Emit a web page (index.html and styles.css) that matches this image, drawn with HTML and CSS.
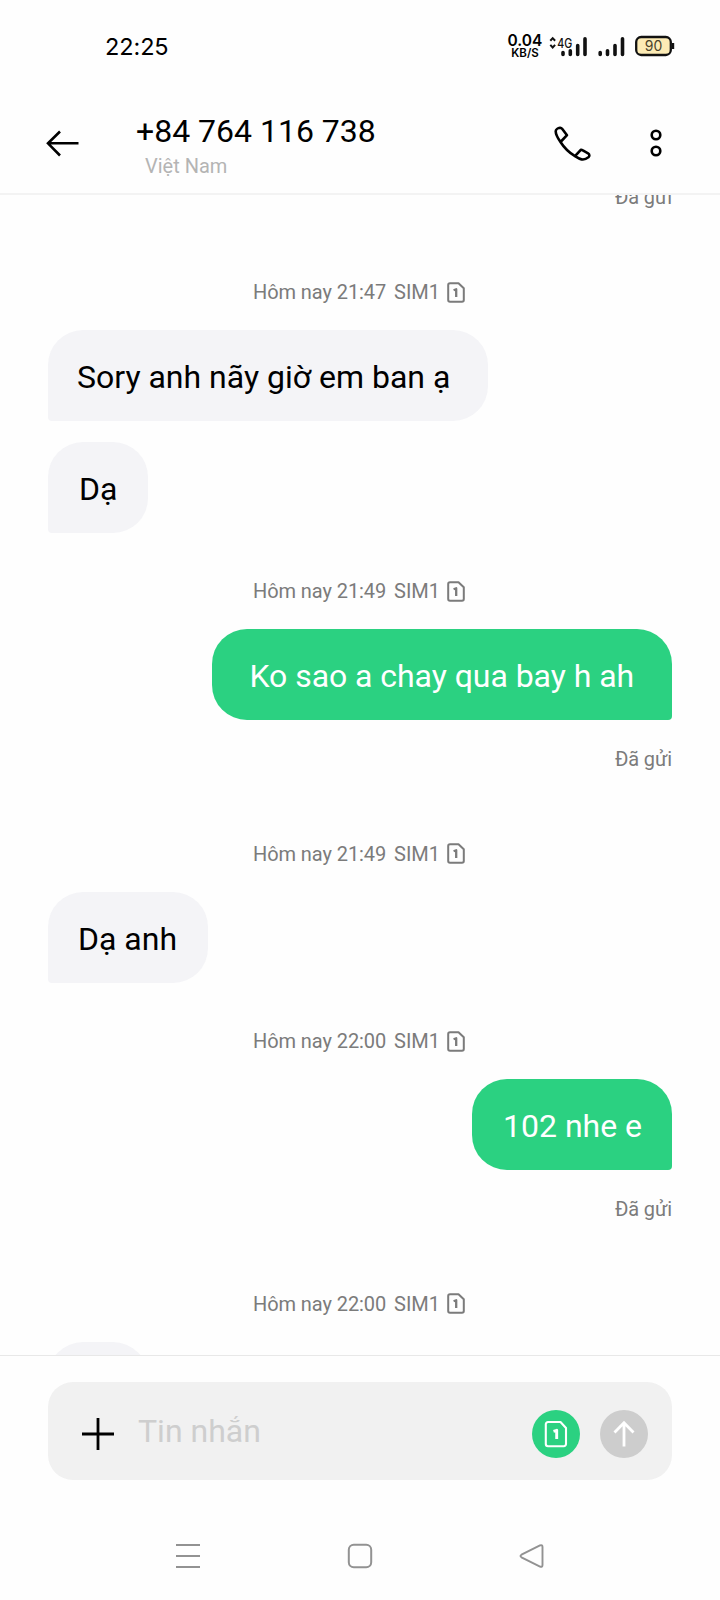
FILE: index.html
```html
<!DOCTYPE html>
<html lang="vi">
<head>
<meta charset="utf-8">
<title>+84 764 116 738</title>
<link rel="stylesheet" href="styles.css">
</head>
<body>
<svg class="defs" width="0" height="0" aria-hidden="true">
  <symbol id="sim" viewBox="0 0 18 21">
    <path d="M3 1.2h8.5L16.8 6.2V18a1.8 1.8 0 0 1-1.8 1.8H3A1.8 1.8 0 0 1 1.2 18V3A1.8 1.8 0 0 1 3 1.2Z" fill="none" stroke="currentColor" stroke-width="2" stroke-linejoin="round"/>
    <path d="M6.600 8.200 9.200 7.200V15" fill="none" stroke="currentColor" stroke-width="2.300" stroke-linejoin="round"/>
  </symbol>
  <symbol id="sim-light" viewBox="0 0 24 28">
    <path d="M4 2h12.500L22 8V24a2.200 2.200 0 0 1-2.200 2.200H4A2.200 2.200 0 0 1 1.800 24V4.200A2.200 2.200 0 0 1 4 2Z" fill="none" stroke="currentColor" stroke-width="2.100" stroke-linejoin="round"/>
    <path d="M9.500 11.300 12.700 10.300V19" fill="none" stroke="currentColor" stroke-width="2.900" stroke-linejoin="round"/>
  </symbol>
</svg>
<div class="phone">
  <div class="statusbar">
    <span class="clock">22:25</span>
    <div class="indicators">
      <div class="speed"><span class="rate">0.04</span><span class="unit">KB/S</span></div>
      <svg class="signals" width="78" height="24" viewBox="0 0 78 24">
        <path d="M1.300 7.200 3.700 4.600 6.100 7.200M1.300 11.400 3.700 14 6.100 11.400" transform="translate(0 -.5)" fill="none" stroke="#111" stroke-width="2"/>
        <text class="net" x="8.200" y="13.500" textLength="15" lengthAdjust="spacingAndGlyphs">4G</text>
        <path d="M14 18.500v2M21.300 16.800v3.700M28.700 11.500v9M36 4.800v15.700M51.200 18.500v2M58.500 16.800v3.700M66 11.500v9M73.500 4.800v15.700" stroke="#111" stroke-width="3.600" stroke-linecap="round"/>
      </svg>
      <svg class="battery" width="40" height="22" viewBox="0 0 40 22">
        <rect x="1.200" y="2" width="34.600" height="18" rx="5" fill="#fcebb5" stroke="#111" stroke-width="2.300"/>
        <path d="M38 8v6" stroke="#111" stroke-width="2.400"/>
        <text class="charge" x="18.500" y="16" text-anchor="middle">90</text>
      </svg>
    </div>
  </div>

  <header class="header">
    <svg class="back" width="34" height="28" viewBox="0 0 34 28">
      <path d="M32.500 14.300H2M14 2.500 2 14.300 14 26.500" fill="none" stroke="#000" stroke-width="2.600"/>
    </svg>
    <div class="contact">
      <div class="number">+84 764 116 738</div>
      <div class="region">Việt Nam</div>
    </div>
    <svg class="call" width="38" height="36" viewBox="0 0 38 36">
      <path d="M6.500 16C3 11 1.700 7.500 1.700 5.200 1.700 3.500 4 2 6 1.700 7 1.600 7.700 2.200 8.300 3L13 9.200 6.500 16C10 21.500 15 26.500 21 30.200M21 30.200 27 23.700C28 23.900 31.500 25.800 34 27.300 35.700 28.500 35.800 30 34.400 31.300 29.500 35.300 25.500 33.200 21 30.200" fill="none" stroke="#000" stroke-width="2.600" stroke-linejoin="round"/>
    </svg>
    <svg class="more" width="12" height="28" viewBox="0 0 12 28">
      <circle cx="6" cy="6" r="4.300" fill="none" stroke="#000" stroke-width="2.600"/>
      <circle cx="6" cy="22" r="4.300" fill="none" stroke="#000" stroke-width="2.600"/>
    </svg>
  </header>

  <main class="chat">
    <div class="thread">
      <section class="group">
        <div class="sent">Đã gửi</div>
      </section>
      <section class="group">
        <div class="time"><span class="when">Hôm nay 21:47</span><span class="slot">SIM1</span><svg class="sim"><use href="#sim"/></svg></div>
        <div class="bubble in wide">Sory anh nãy giờ em ban ạ</div>
      </section>
      <section class="group">
        <div class="bubble in short">Dạ</div>
      </section>
      <section class="group">
        <div class="time"><span class="when">Hôm nay 21:49</span><span class="slot">SIM1</span><svg class="sim"><use href="#sim"/></svg></div>
        <div class="bubble out long">Ko sao a chay qua bay h ah</div>
        <div class="sent">Đã gửi</div>
      </section>
      <section class="group">
        <div class="time"><span class="when">Hôm nay 21:49</span><span class="slot">SIM1</span><svg class="sim"><use href="#sim"/></svg></div>
        <div class="bubble in medium">Dạ anh</div>
      </section>
      <section class="group">
        <div class="time"><span class="when">Hôm nay 22:00</span><span class="slot">SIM1</span><svg class="sim"><use href="#sim"/></svg></div>
        <div class="bubble out room">102 nhe e</div>
        <div class="sent">Đã gửi</div>
      </section>
      <section class="group">
        <div class="time"><span class="when">Hôm nay 22:00</span><span class="slot">SIM1</span><svg class="sim"><use href="#sim"/></svg></div>
        <div class="bubble in short"></div>
      </section>
    </div>
  </main>

  <footer class="composer">
    <div class="field">
      <svg class="plus" width="32" height="32" viewBox="0 0 32 32"><path d="M16 0v32M0 16h32" stroke="#000" stroke-width="2.800"/></svg>
      <span class="placeholder">Tin nhắn</span>
      <div class="button simpick"><svg width="24" height="28"><use href="#sim-light"/></svg></div>
      <div class="button send">
        <svg width="24" height="28" viewBox="0 0 24 28"><path d="M12 26.500V2.500M2.500 12.500 12 2.800 21.500 12.500" fill="none" stroke="#fff" stroke-width="2.800"/></svg>
      </div>
    </div>
  </footer>

  <nav class="navbar">
    <svg width="26" height="26" viewBox="0 0 26 26"><path d="M1 2h24M1 13h24M1 24h24" stroke="#929292" stroke-width="2"/></svg>
    <svg width="26" height="26" viewBox="0 0 26 26"><rect x="1.800" y="1.800" width="22.400" height="22.400" rx="5" fill="none" stroke="#929292" stroke-width="2"/></svg>
    <svg width="26" height="26" viewBox="0 0 26 26"><path d="M21 2.400 2.500 11.700Q.5 13 2.500 14.300L21 23.600Q23.500 24.400 23.500 22V4Q23.500 1.600 21 2.400Z" fill="none" stroke="#929292" stroke-width="1.900"/></svg>
  </nav>
</div>
</body>
</html>
```
FILE: styles.css
```css
* { box-sizing: border-box; }
body {
  margin: 0;
  background: #fefefe;
  color: #000;
  font-family: Roboto, "Noto Sans", sans-serif;
}
svg { display: block; flex: none; }
.defs { position: absolute; }
.phone {
  width: 720px;
  height: 1600px;
  display: flex;
  flex-direction: column;
  overflow: hidden;
}

/* Status bar */
.statusbar {
  flex: none;
  height: 92px;
  padding: 0 45px 0 105px;
  display: flex;
  align-items: center;
  justify-content: space-between;
}
.clock {
  font-family: Inter, sans-serif;
  font-size: 23.5px;
  line-height: 30px;
  letter-spacing: -0.1px;
  padding-top: 1px;
}
.indicators { display: flex; align-items: center; }
.speed {
  width: 36px;
  display: flex;
  flex-direction: column;
  align-items: center;
  font-family: Inter, sans-serif;
  font-weight: 600;
  margin-right: 6px;
}
.rate { font-size: 15.5px; line-height: 14px; }
.unit { font-size: 11.5px; line-height: 11px; font-weight: 600; }
.net { font: 500 13px Inter, sans-serif; fill: #111; }
.signals { margin-right: 8px; }
.charge { font: 14px Inter, sans-serif; fill: #4b432b; }

/* Header */
.header {
  flex: none;
  height: 103px;
  padding: 0 58px 0 46px;
  border-bottom: 2px solid #f3f3f3;
  display: flex;
  align-items: flex-start;
}
.back { margin-top: 37px; }
.contact { margin: 20px 0 0 56px; flex: 1; }
.number { font-size: 32px; line-height: 38px; }
.region {
  margin: 3px 0 0 9px;
  font-size: 20px;
  line-height: 26px;
  color: #b4b4b4;
}
.call { margin: 34px 58px 0 0; }
.more { margin-top: 37px; }

/* Messages */
.chat {
  flex: none;
  height: 1161px;
  overflow: hidden;
  border-bottom: 1px solid #e8e8e8;
}
.thread {
  margin-top: -36.5px;
  padding: 0 48px;
  display: flex;
  flex-direction: column;
  gap: 20.5px;
}
.group { display: flex; flex-direction: column; }
.time, .sent {
  display: flex;
  align-items: center;
  font-size: 20px;
  line-height: 24px;
  color: #7b7b7b;
}
.time { height: 76px; padding-left: 205px; }
.when { width: 133px; margin-right: 8px; white-space: nowrap; letter-spacing: -0.08px; }
.slot { width: 45px; margin-right: 8px; }
.sim { width: 18px; height: 21px; }
.sent { height: 75px; padding-top: 2px; justify-content: flex-end; letter-spacing: -0.1px; }
.bubble {
  height: 91px;
  border-radius: 35px;
  font-size: 32px;
  line-height: 94px;
  white-space: nowrap;
}
.in {
  align-self: flex-start;
  background: #f4f4f7;
  border-bottom-left-radius: 4px;
  padding-left: 31px;
}
.out {
  align-self: flex-end;
  background: #2bd181;
  color: #fff;
  border-bottom-right-radius: 4px;
}
.wide { width: 440px; padding-left: 29px; }
.short { width: 100px; }
.medium { width: 160px; padding-left: 30px; }
.long { width: 460px; padding-left: 37.5px; letter-spacing: -0.05px; }
.room { width: 200px; padding-left: 31px; }

/* Composer */
.composer { flex: none; padding: 26px 48px 0; }
.field {
  height: 98px;
  border-radius: 25px;
  background: #f1f1f1;
  padding: 5px 24px 0 34px;
  display: flex;
  align-items: center;
}
.placeholder {
  flex: 1;
  margin: -5px 0 0 24px;
  font-size: 32px;
  line-height: 40px;
  color: #cecece;
}
.button {
  width: 48px;
  height: 48px;
  border-radius: 50%;
  display: flex;
  align-items: center;
  justify-content: center;
}
.simpick { background: #2bd181; color: #fff; margin-right: 20px; }
.send { background: #cdcdcd; }

/* System navigation */
.navbar {
  flex: 1;
  padding: 63px 175px 0;
  display: flex;
  justify-content: space-between;
}
```
